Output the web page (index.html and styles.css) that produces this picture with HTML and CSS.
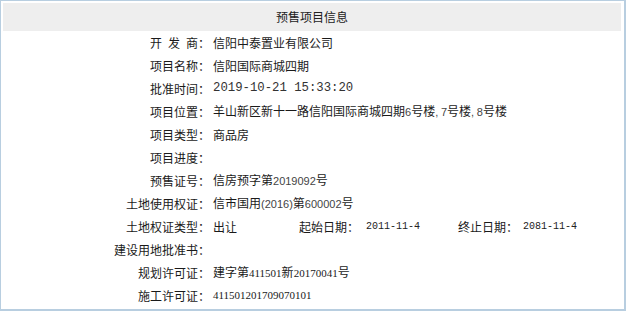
FILE: index.html
```html
<!DOCTYPE html>
<html lang="zh-CN">
<head>
<meta charset="utf-8">
<title>预售项目信息</title>
<link rel="stylesheet" href="styles.css">
</head>
<body>
<div class="panel">
  <div class="head">预售项目信息</div>
  <div class="rows">
    <div class="row"><span class="lbl">开&ensp;发&ensp;商：</span><span class="val">信阳中泰置业有限公司</span></div>
    <div class="row"><span class="lbl">项目名称：</span><span class="val">信阳国际商城四期</span></div>
    <div class="row"><span class="lbl">批准时间：</span><span class="val mono">2019-10-21 15:33:20</span></div>
    <div class="row"><span class="lbl">项目位置：</span><span class="val">羊山新区新十一路信阳国际商城四期<span class="sm">6</span>号楼<span class="sm">,</span> <span class="sm">7</span>号楼<span class="sm">,</span> <span class="sm">8</span>号楼</span></div>
    <div class="row"><span class="lbl">项目类型：</span><span class="val">商品房</span></div>
    <div class="row"><span class="lbl">项目进度：</span><span class="val"></span></div>
    <div class="row"><span class="lbl">预售证号：</span><span class="val">信房预字第<span class="sm">2019092</span>号</span></div>
    <div class="row"><span class="lbl">土地使用权证：</span><span class="val">信市国用<span class="sm">(2016)</span>第<span class="sm">600002</span>号</span></div>
    <div class="row"><span class="lbl">土地权证类型：</span><span class="val split"><span class="c1">出让</span><span class="c2">起始日期：</span><span class="c3 mono2">2011-11-4</span><span class="c4">终止日期：</span><span class="c5 mono2">2081-11-4</span></span></div>
    <div class="row"><span class="lbl">建设用地批准书：</span><span class="val"></span></div>
    <div class="row"><span class="lbl">规划许可证：</span><span class="val">建字第<span class="serif">411501</span>新<span class="serif">20170041</span>号</span></div>
    <div class="row"><span class="lbl">施工许可证：</span><span class="val serif">411501201709070101</span></div>
  </div>
</div>
</body>
</html>
```

FILE: styles.css
```css
html, body {
  margin: 0;
  padding: 0;
  background: #ffffff;
}
body {
  font-family: "Noto Sans CJK SC", "Liberation Sans", sans-serif;
  font-size: 12px;
  color: #1a1a1a;
}
.panel {
  box-sizing: border-box;
  width: 626px;
  height: 311px;
  border: 1px solid #b8cee0;
  border-right-width: 2px;
  border-bottom-width: 2px;
  padding: 2px 3px 2px 2px;
  overflow: hidden;
}
.head {
  height: 28px;
  line-height: 28px;
  background: #eeeeee;
  text-align: center;
  color: #222;
  font-size: 12px;
}
.rows {
  display: flex;
  flex-direction: column;
}
.row {
  display: flex;
  height: 23px;
  line-height: 23px;
  align-items: center;
}
.lbl {
  width: 207px;
  text-align: right;
  flex: none;
  white-space: nowrap;
}
.val {
  padding-left: 3px;
  white-space: nowrap;
}
.mono {
  font-family: "Liberation Mono", monospace;
  font-size: 12.3px;
  color: #333;
}
.mono2 {
  font-family: "Liberation Mono", monospace;
  font-size: 10px;
  color: #222;
}
.sm {
  font-family: "Liberation Sans", sans-serif;
  font-size: 11px;
  color: #444;
}
.serif {
  font-family: "Liberation Serif", serif;
  font-size: 11px;
}
.split {
  display: flex;
  align-items: center;
}
.c1 { width: 86px; }
.c2 { width: 67px; }
.c3 { width: 92px; }
.c4 { width: 65px; }
```
